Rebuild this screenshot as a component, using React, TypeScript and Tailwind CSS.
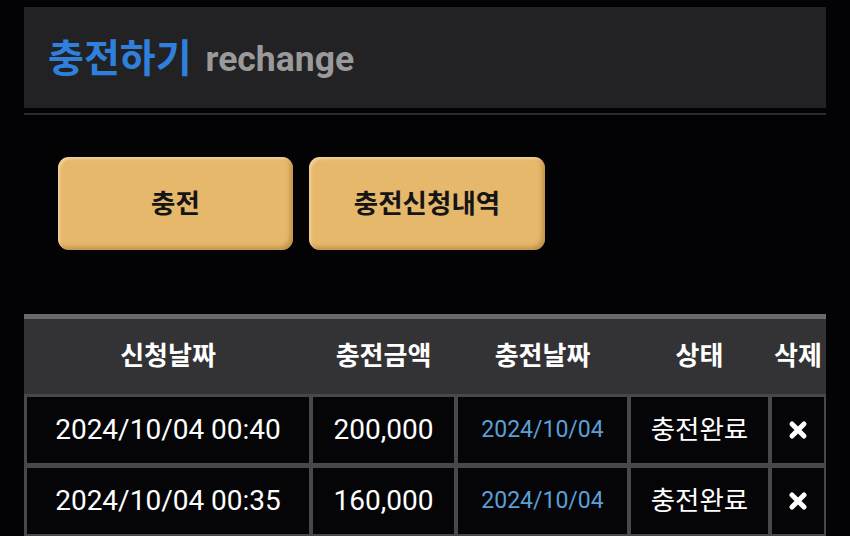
import { ReactNode } from "react";

const font = { fontFamily: "Roboto, 'Noto Sans CJK KR', sans-serif" };

type Row = {
  requested: string;
  amount: string;
  charged: string;
  status: string;
};

const rows: Row[] = [
  { requested: "2024/10/04 00:40", amount: "200,000", charged: "2024/10/04", status: "충전완료" },
  { requested: "2024/10/04 00:35", amount: "160,000", charged: "2024/10/04", status: "충전완료" },
];

const cols = "grid grid-cols-[282px_141px_169px_137px_52px] gap-x-[4px] px-[3px]";

const HeadCell = ({ children }: { children: ReactNode }) => (
  <div className="flex items-center justify-center text-[26px] font-bold text-white">{children}</div>
);

const Cell = ({ children }: { children: ReactNode }) => (
  <div className="flex h-[66px] items-center justify-center bg-[#050507]">{children}</div>
);

const DeleteIcon = () => (
  <svg width="20" height="20" viewBox="0 0 20 20">
    <path d="M4 4 L16 16 M16 4 L4 16" stroke="white" strokeWidth="5" strokeLinecap="round" />
  </svg>
);

const GoldButton = ({ label, width }: { label: string; width: string }) => (
  <button
    className={`${width} h-[93px] rounded-[11px] bg-[#e6b86c] text-[26.5px] font-bold text-[#151515] shadow-[inset_2px_2px_3px_rgba(255,240,200,0.5),inset_-3px_-3px_4px_rgba(150,100,30,0.45)]`}
  >
    {label}
  </button>
);

export default function App() {
  return (
    <div className="min-h-screen bg-[#030305] px-[24px] pt-[7px]" style={font}>
      {/* page title */}
      <div className="flex h-[101px] items-center bg-[#222224] pl-[24px] pt-[4px]">
        <span className="text-[39px] font-bold text-[#2f80dc]">충전하기</span>
        <span className="ml-[14px] text-[35.5px] font-bold text-[#9a9a9a]">rechange</span>
      </div>
      <div className="mt-[5px] h-[2px] bg-[#2a2a2e]" />

      {/* actions */}
      <div className="flex gap-[16px] px-[34px] pt-[42px] pb-[64px]">
        <GoldButton label="충전" width="w-[235px]" />
        <GoldButton label="충전신청내역" width="w-[236px]" />
      </div>

      {/* history table */}
      <div className="border-t-[5px] border-[#6a6a6e] bg-[#48484c]">
        <div className={`${cols} h-[75px] bg-[#333335]`}>
          <HeadCell>신청날짜</HeadCell>
          <HeadCell>충전금액</HeadCell>
          <HeadCell>충전날짜</HeadCell>
          <HeadCell>상태</HeadCell>
          <HeadCell>삭제</HeadCell>
        </div>
        <div className={`${cols} gap-y-[5px] pt-[3px] pb-[3px]`}>
          {rows.map((r, i) => (
            <div key={i} className="contents">
              <Cell>
                <span className="text-[28px] text-white">{r.requested}</span>
              </Cell>
              <Cell>
                <span className="text-[28px] text-white">{r.amount}</span>
              </Cell>
              <Cell>
                <span className="text-[23px] text-[#5b9fd6]">{r.charged}</span>
              </Cell>
              <Cell>
                <span className="text-[26.5px] text-white">{r.status}</span>
              </Cell>
              <Cell>
                <DeleteIcon />
              </Cell>
            </div>
          ))}
        </div>
      </div>
    </div>
  );
}
